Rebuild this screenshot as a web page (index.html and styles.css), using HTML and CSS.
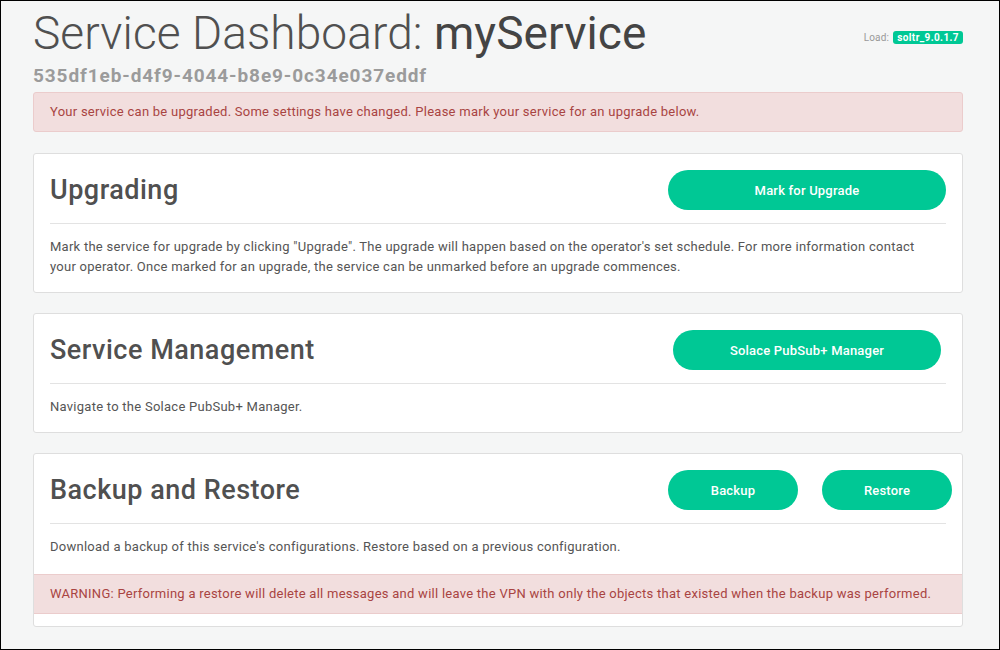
FILE: index.html
```html
<!DOCTYPE html>
<html>
<head>
<meta charset="utf-8">
<link rel="stylesheet" href="styles.css">
</head>
<body>
<div class="frame">
  <div class="page">
    <header class="page-head">
      <div class="titles">
        <h1 class="title"><span class="title-light">Service Dashboard:</span> <span class="title-name">myService</span></h1>
        <div class="uuid">535df1eb-d4f9-4044-b8e9-0c34e037eddf</div>
      </div>
      <div class="load">Load: <span class="badge">soltr_9.0.1.7</span></div>
    </header>

    <div class="alert">Your service can be upgraded. Some settings have changed. Please mark your service for an upgrade below.</div>

    <section class="card">
      <div class="card-head">
        <h2 class="card-title">Upgrading</h2>
        <div class="actions">
          <button class="btn btn-upgrade">Mark for Upgrade</button>
        </div>
      </div>
      <p class="card-text">Mark the service for upgrade by clicking "Upgrade". The upgrade will happen based on the operator's set schedule. For more information contact your operator. Once marked for an upgrade, the service can be unmarked before an upgrade commences.</p>
    </section>

    <section class="card">
      <div class="card-head">
        <h2 class="card-title">Service Management</h2>
        <div class="actions actions-mgr">
          <button class="btn btn-mgr">Solace PubSub+ Manager</button>
        </div>
      </div>
      <p class="card-text">Navigate to the Solace PubSub+ Manager.</p>
    </section>

    <section class="card card-backup">
      <div class="card-head">
        <h2 class="card-title">Backup and Restore</h2>
        <div class="actions actions-pair">
          <button class="btn btn-small">Backup</button>
          <button class="btn btn-small">Restore</button>
        </div>
      </div>
      <p class="card-text">Download a backup of this service's configurations. Restore based on a previous configuration.</p>
      <div class="warning">WARNING: Performing a restore will delete all messages and will leave the VPN with only the objects that existed when the backup was performed.</div>
    </section>
  </div>
</div>
</body>
</html>
```

FILE: styles.css
```css
* { box-sizing: border-box; }
html, body { margin: 0; padding: 0; }
body {
  font-family: Roboto, "Liberation Sans", sans-serif;
  color: #555;
}
.frame {
  width: 1000px;
  height: 650px;
  border: 1px solid #000;
  background: #f5f6f6;
  overflow: hidden;
}
.page {
  padding: 0 36px 0 32px;
}
.page-head {
  display: flex;
  justify-content: space-between;
  align-items: flex-start;
}
.title {
  margin: 0;
  font-size: 46px;
  line-height: 56px;
  font-weight: 300;
  color: #505050;
  padding-top: 4px;
  letter-spacing: 0.1px;
}
.title-name {
  font-weight: 400;
  color: #444;
}
.uuid {
  font-size: 19px;
  font-weight: 700;
  color: #9b9b9b;
  line-height: 22px;
  margin-top: 4px;
  letter-spacing: 0.9px;
}
.load {
  margin-top: 30px;
  font-size: 10px;
  color: #999;
  display: flex;
  align-items: center;
  gap: 4px;
  letter-spacing: 0.2px;
}
.badge {
  background: #00c895;
  color: #fff;
  font-weight: 700;
  font-size: 10px;
  border-radius: 3px;
  padding: 1px 4px;
  line-height: 11px;
  letter-spacing: 0.4px;
}
.alert {
  margin-top: 5px;
  background: #f2dede;
  border: 1px solid #ebcccc;
  border-radius: 3px;
  color: #a94442;
  font-size: 13px;
  line-height: 20px;
  padding: 9px 16px;
  letter-spacing: 0.26px;
}
.card {
  margin-top: 21px;
  background: #fff;
  border: 1px solid #dedede;
  border-radius: 3px;
  padding: 16px 16px 15px;
}
.card + .card { margin-top: 20px; }
.card-head {
  display: flex;
  justify-content: space-between;
  align-items: center;
  padding-bottom: 13px;
  border-bottom: 1px solid #e3e3e3;
}
.card-title {
  margin: 0;
  font-size: 27px;
  font-weight: 500;
  color: #505050;
  letter-spacing: 0.5px;
}
.actions {
  display: flex;
  gap: 24px;
}
.actions-mgr { margin-right: 5px; }
.actions-pair { margin-right: -6px; }
.btn {
  height: 40px;
  border: none;
  border-radius: 20px;
  background: #00c895;
  color: #fff;
  font-family: inherit;
  font-size: 13px;
  font-weight: 500;
  letter-spacing: 0.2px;
  padding: 0;
}
.btn-upgrade { width: 278px; }
.btn-mgr { width: 268px; }
.btn-small { width: 130px; }
.card-text {
  margin: 13px 0 0;
  padding-right: 6px;
  font-size: 13px;
  line-height: 20px;
  color: #555;
  letter-spacing: 0.26px;
}
.card-backup { padding-bottom: 12px; }
.warning {
  margin: 17px -16px 0;
  background: #f2dede;
  border-top: 1px solid #ebcccc;
  border-bottom: 1px solid #ebcccc;
  color: #a94442;
  font-size: 13px;
  line-height: 20px;
  padding: 9px 16px;
  letter-spacing: 0.26px;
}
```
